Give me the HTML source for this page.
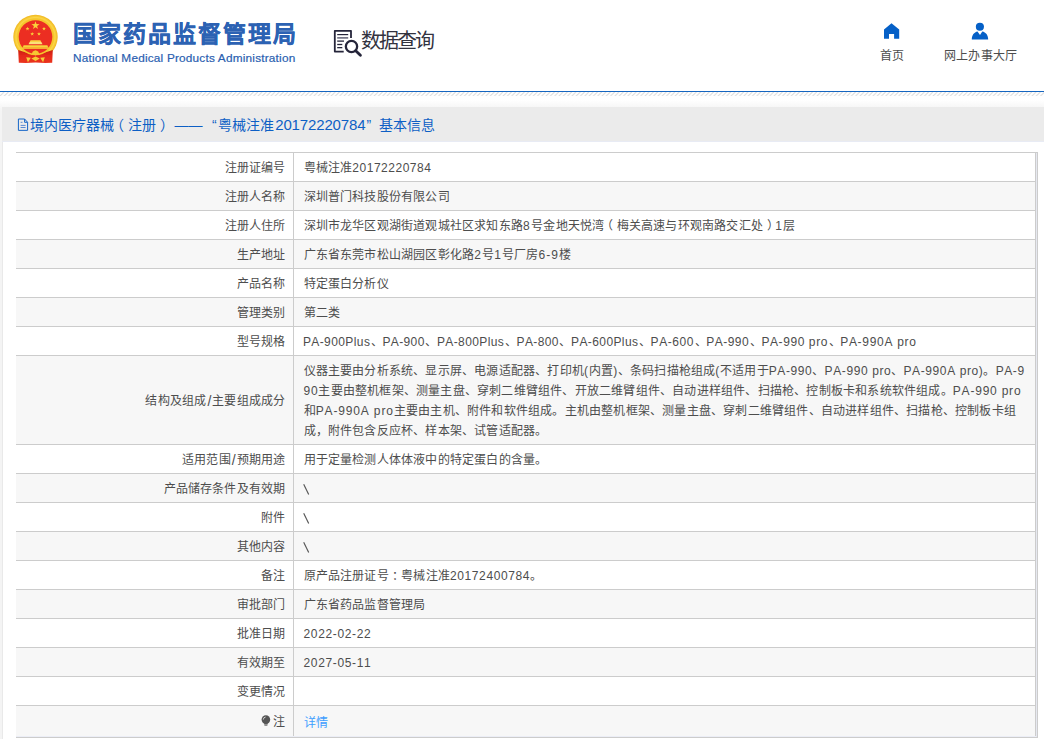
<!DOCTYPE html>
<html lang="zh-CN">
<head>
<meta charset="utf-8">
<title>国家药品监督管理局 数据查询</title>
<style>
html,body{margin:0;padding:0;}
html{width:1044px;height:739px;overflow:hidden;background:#fff;}
body{width:1044px;height:739px;overflow:hidden;background:#fff;position:relative;
 font-family:"Liberation Sans",sans-serif;font-size:12px;color:#444;}
.abs{position:absolute;}
#hdr{position:absolute;left:0;top:0;width:1044px;height:91px;background:#fff;}
#cn{position:absolute;left:73px;top:16px;font-size:23px;font-weight:bold;color:#2c62b3;white-space:nowrap;line-height:36px;letter-spacing:2px;-webkit-text-stroke:0.3px #2c62b3;}
#en{position:absolute;left:73px;top:50px;font-size:11.8px;color:#2a5eb0;white-space:nowrap;line-height:16px;letter-spacing:0.2px;-webkit-text-stroke:0.2px #2a5eb0;}
#dq{position:absolute;left:361px;top:27px;font-size:20px;color:#33333f;white-space:nowrap;line-height:28px;letter-spacing:-2px;}
.nav{position:absolute;top:48px;font-size:12px;color:#4d4d4d;letter-spacing:0.2px;line-height:16px;white-space:nowrap;text-align:center;}
#blue{position:absolute;left:0;top:91px;width:1044px;height:1px;background:#1565c0;}
#hatch{position:absolute;left:0;top:92px;width:1044px;height:4px;display:block;}
#pgbg{position:absolute;left:0;top:96px;width:1044px;height:643px;background:linear-gradient(#fff 0,#fff 4px,#f7f7f7 11px,#f4f4f4 15px,#f4f4f4 100%);}
#box{position:absolute;left:2px;top:107px;width:1042px;height:632px;background:#fff;overflow:hidden;}
#lstrip{position:absolute;left:0;top:35px;width:1px;height:597px;background:#e9e9e9;}
#bstrip{position:absolute;left:14px;top:629px;width:1020px;height:1px;background:#eceef6;}
#bar{position:absolute;left:0;top:0;width:100%;height:34px;background:#ebebeb;border-bottom:1px solid #e8ebf4;}
#ttl{position:absolute;left:0;top:0;line-height:35px;font-size:14px;color:#0d5fc5;white-space:nowrap;}
#ttl span{position:absolute;top:1px;}
table{position:absolute;left:14px;top:45px;width:1020px;border-collapse:collapse;table-layout:fixed;}
td{border:1px solid #ccc;padding:5px 10px 3px;line-height:20px;font-size:12px;vertical-align:middle;color:#4d4d4d;letter-spacing:0.2px;}
td.l{width:259.5px;text-align:right;padding-right:7px;padding-left:10px;border-left:none;}
tr:nth-child(even) td{background:#f7f7f7;}
#rstrip{position:absolute;left:1034px;top:45px;width:1px;height:584px;border-bottom:1px solid #ccc;background:#e6e8f0;border-top:1px solid #ccc;border-right:1px solid #ccc;}
td.nw{white-space:nowrap;}
.e{letter-spacing:0.65px;font-kerning:none;font-size:12px;}
.ib{display:inline-block;letter-spacing:0.42px;white-space:nowrap;margin-left:-0.6px;margin-right:0.6px;}
.bs{vertical-align:-2px;margin-left:-1px;}
.sl{font-size:14px;line-height:0;letter-spacing:0;margin:0 1px;position:relative;top:0.5px;}
.pl{position:relative;left:-3.5px;}
.pr{position:relative;left:3.5px;}
.pc{position:relative;left:3px;}
tr.last td{height:23px;}
tr.last td.l{padding-top:4px;padding-bottom:4px;}
.bulb{vertical-align:-1px;margin-right:2px;}
a{color:#409eff;text-decoration:none;}
</style>
</head>
<body>
<div id="hdr">
  <svg id="emblem" class="abs" style="left:10px;top:12px" width="52" height="54" viewBox="10 12 52 54">
    <defs>
      <radialGradient id="gold" cx="50%" cy="50%" r="50%"><stop offset="0.76" stop-color="#f2b91f"/><stop offset="0.88" stop-color="#fbd646"/><stop offset="1" stop-color="#f0b61e"/></radialGradient>
      <linearGradient id="rib" x1="0" y1="0" x2="0" y2="1"><stop offset="0" stop-color="#c91f10"/><stop offset="0.45" stop-color="#e62a1b"/><stop offset="1" stop-color="#ea3420"/></linearGradient>
      <filter id="soft" x="-5%" y="-5%" width="110%" height="110%"><feGaussianBlur stdDeviation="0.35"/></filter>
    </defs>
    <g filter="url(#soft)">
      <circle cx="35.5" cy="37" r="22.2" fill="url(#gold)"/>
      <!-- ribbons over lower ring -->
      <path d="M18.2 50 L26 52.5 H45 L52.8 50 L52.2 62.7 L45.2 63 L35.5 62.4 L25.8 63 L18.8 62.7 Z" fill="url(#rib)"/>
      <!-- thin inner ring + red disc -->
      <circle cx="35.5" cy="37" r="18.3" fill="#f6c52c"/>
      <circle cx="35.5" cy="37" r="16.8" fill="#ec2d22"/>
      <!-- stars -->
      <polygon fill="#f9d23a" points="35.5,21.2 36.5,24.1 39.6,24.2 37.1,26.0 38.0,29.0 35.5,27.2 33.0,29.0 33.9,26.0 31.4,24.2 34.5,24.1"/>
      <polygon fill="#f9d23a" points="27.5,26.8 28.0,28.1 29.4,28.1 28.3,29.0 28.7,30.4 27.5,29.6 26.3,30.4 26.7,29.0 25.6,28.1 27.0,28.1"/>
      <polygon fill="#f9d23a" points="44,26.8 44.5,28.1 45.9,28.1 44.8,29.0 45.2,30.4 44,29.6 42.8,30.4 43.2,29.0 42.1,28.1 43.5,28.1"/>
      <polygon fill="#f9d23a" points="32.2,32.0 32.7,33.3 34.1,33.3 33.0,34.2 33.4,35.6 32.2,34.8 31.0,35.6 31.4,34.2 30.3,33.3 31.7,33.3"/>
      <polygon fill="#f9d23a" points="39,32.0 39.5,33.3 40.9,33.3 39.8,34.2 40.2,35.6 39,34.8 37.8,35.6 38.2,34.2 37.1,33.3 38.5,33.3"/>
      <!-- Tiananmen -->
      <path d="M30.6 40.2 L40.4 40.2 L41.3 42.1 L29.7 42.1 Z" fill="#f9d544"/>
      <path d="M29.6 42.1 L41.4 42.1 L42.5 44.3 L28.5 44.3 Z" fill="#fbe07a"/>
      <path d="M23.6 45.2 L47.4 45.2 L48.4 47.8 L22.6 47.8 Z" fill="#f9d23a"/>
      <rect x="20.2" y="47.7" width="30.6" height="1.1" fill="#f8cf35"/>
      <!-- bottom knot -->
      <path d="M31.2 55.1 L32.8 51.6 L35.5 50.3 L38.2 51.6 L39.8 55.1 L37.8 54.3 L35.5 55.4 L33.2 54.3 Z" fill="#f6c832"/>
      <path d="M26.2 57.3 L30.8 57.8 L27.9 62.2 Z" fill="#f6cf3a"/>
      <path d="M44.8 57.3 L40.2 57.8 L43.1 62.2 Z" fill="#f6cf3a"/>
      <path d="M31.4 58.6 L35.5 56.4 L39.8 58.6 L35.5 60.9 Z" fill="#f6cc36"/>
    </g>
  </svg>
  <div id="cn">国家药品监督管理局</div>
  <div id="en">National Medical Products Administration</div>
  <svg class="abs" style="left:330px;top:26px" width="36" height="34" viewBox="330 26 36 34" fill="none" stroke="#25253a">
    <path d="M351 38 V30.8 H334.8 V51.6 H343.7" stroke-width="1.8" stroke-linejoin="round"/>
    <path d="M337.2 34.6 H348.2" stroke-width="1.2"/>
    <path d="M337.2 37.9 H348.2" stroke-width="1.4" stroke="#55556a"/>
    <path d="M337.2 41.1 H344" stroke-width="1.3"/>
    <path d="M337.2 44.5 H342.3" stroke-width="1.3"/>
    <path d="M337.2 47.65 H342.3" stroke-width="1.3"/>
    <circle cx="351.5" cy="46.5" r="5.65" stroke-width="2.3"/>
    <path d="M355.7 50.8 L360.4 55.2" stroke-width="2.9" stroke-linecap="round"/>
  </svg>
  <div id="dq">数据查询</div>
  <svg class="abs" style="left:880px;top:20px" width="24" height="22" viewBox="880 20 24 22">
    <path d="M884 29.4 L891.5 23.3 L899.2 29.4 V38.8 H894.1 V33.9 H889 V38.8 H884 Z" fill="#0560c7"/>
  </svg>
  <svg class="abs" style="left:968px;top:20px" width="24" height="22" viewBox="968 20 24 22">
    <circle cx="979.9" cy="26.76" r="4.06" fill="#0560c7"/>
    <path d="M971.8 39.55 C971.8 35.2 974.2 32.2 977.5 31.6 L980 35.1 L982.3 31.6 C985.8 32.2 988.2 35.2 988.2 39.55 Z" fill="#0560c7"/>
  </svg>
  <div class="nav" style="left:880px;">首页</div>
  <div class="nav" style="left:944px;">网上办事大厅</div>
</div>
<div id="blue"></div>
<svg id="hatch" width="1044" height="4" viewBox="0 0 1044 4"><defs><pattern id="hp" width="4.3" height="4" patternUnits="userSpaceOnUse"><path d="M-0.2 4.2 L4.2 -0.2 M-4.5 4.2 L-0.1 -0.2 M4.1 4.2 L8.5 -0.2" stroke="#dcdcdc" stroke-width="1.0" fill="none"/></pattern></defs><rect x="0" y="0" width="1044" height="4" fill="url(#hp)"/></svg>
<div id="pgbg"></div>
<div id="box">
  <div id="lstrip"></div>
  <div id="bar">
    <svg class="abs" style="left:14px;top:9px" width="16" height="18" viewBox="16 116 16 18" fill="none" stroke="#1565c8">
      <path d="M18.4 119 H24.6 L27.6 122.3 V130.35 H18.4 Z" stroke-width="1"/>
      <path d="M24.6 119 V122.3 H27.6" stroke-width="1"/>
      <path d="M20.6 122.3 H22.5 M20.6 125.4 H25.6 M20.6 127.5 H25.6" stroke-width="0.9" stroke="#4a7fd0"/>
    </svg>
    <div id="ttl">
      <span style="left:28.4px">境内医疗器械</span>
      <span style="left:108.4px">（</span>
      <span style="left:126.4px">注册</span>
      <span style="left:158.4px">）</span>
      <span style="left:172.4px">——</span>
      <span style="left:210px">“</span>
      <span style="left:216.4px">粤械注准</span>
      <span style="left:273.2px;top:0.4px;letter-spacing:-0.14px;font-size:15px">20172220784</span>
      <span style="left:364.4px">”</span>
      <span style="left:376.7px">基本信息</span>
    </div>
  </div>
  <table>
    <tr><td class="l">注册证编号</td><td>粤械注准<span class="e" style="letter-spacing:0.52px">20172220784</span></td></tr>
    <tr><td class="l">注册人名称</td><td>深圳普门科技股份有限公司</td></tr>
    <tr><td class="l">注册人住所</td><td>深圳市龙华区观湖街道观城社区求知东路<span class="e" style="letter-spacing:1.4px">8</span>号金地天悦湾<span class="pl">（</span>梅关高速与环观南路交汇处<span class="pr">）</span><span class="e" style="letter-spacing:1.4px">1</span>层</td></tr>
    <tr><td class="l">生产地址</td><td>广东省东莞市松山湖园区彰化路<span class="e" style="letter-spacing:1.0px">2</span>号<span class="e" style="letter-spacing:1.0px">1</span>号厂房<span class="e" style="letter-spacing:1.0px">6-9</span>楼</td></tr>
    <tr><td class="l">产品名称</td><td>特定蛋白分析仪</td></tr>
    <tr><td class="l">管理类别</td><td>第二类</td></tr>
    <tr><td class="l">型号规格</td><td><span class="e ib" style="width:67.4px;letter-spacing:0.4px">PA-900Plus</span>、<span class="e ib" style="width:42.2px;letter-spacing:0.36px">PA-900</span>、<span class="e ib" style="width:67.4px;letter-spacing:0.4px">PA-800Plus</span>、<span class="e ib" style="width:42.4px;letter-spacing:0.39px">PA-800</span>、<span class="e ib" style="width:67.3px;letter-spacing:0.39px">PA-600Plus</span>、<span class="e ib" style="width:43.4px;letter-spacing:0.56px">PA-600</span>、<span class="e ib" style="width:43.0px;letter-spacing:0.49px">PA-990</span>、<span class="e ib" style="width:66.6px;letter-spacing:0.59px">PA-990 pro</span>、<span class="e ib" style="width:76px;letter-spacing:0.7px">PA-990A pro</span></td></tr>
    <tr><td class="l">结构及组成<span class="e sl">/</span>主要组成成分</td><td class="nw">仪器主要由分析系统、显示屏、电源适配器、打印机<span class="e" style="letter-spacing:0.6px">(</span>内置<span class="e" style="letter-spacing:0.6px">)</span>、条码扫描枪组成<span class="e" style="letter-spacing:0.6px">(</span>不适用于<span class="e" style="letter-spacing:0.6px">PA-990</span>、<span class="e" style="letter-spacing:0.6px">PA-990 pro</span>、<span class="e" style="letter-spacing:0.6px">PA-990A pro)</span>。<span class="e" style="letter-spacing:0.6px">PA-9</span><br><span class="e" style="letter-spacing:0.78px">90</span>主要由整机框架、测量主盘、穿刺二维臂组件、开放二维臂组件、自动进样组件、扫描枪、控制板卡和系统软件组成。<span class="e" style="letter-spacing:0.78px">PA-990 pro</span><br>和<span class="e" style="letter-spacing:0.85px">PA-990A pro</span>主要由主机、附件和软件组成。主机由整机框架、测量主盘、穿刺二维臂组件、自动进样组件、扫描枪、控制板卡组<br>成，附件包含反应杯、样本架、试管适配器。</td></tr>
    <tr><td class="l">适用范围<span class="e sl">/</span>预期用途</td><td>用于定量检测人体体液中的特定蛋白的含量。</td></tr>
    <tr><td class="l">产品储存条件及有效期</td><td><svg class="bs" width="7" height="12" viewBox="0 0 7 12"><path d="M0.7 1.3 L5.7 11.5" stroke="#555" stroke-width="1.15" fill="none"/></svg></td></tr>
    <tr><td class="l">附件</td><td><svg class="bs" width="7" height="12" viewBox="0 0 7 12"><path d="M0.7 1.3 L5.7 11.5" stroke="#555" stroke-width="1.15" fill="none"/></svg></td></tr>
    <tr><td class="l">其他内容</td><td><svg class="bs" width="7" height="12" viewBox="0 0 7 12"><path d="M0.7 1.3 L5.7 11.5" stroke="#555" stroke-width="1.15" fill="none"/></svg></td></tr>
    <tr><td class="l">备注</td><td>原产品注册证号<span class="pc">：</span>粤械注准<span class="e" style="letter-spacing:0.62px">20172400784</span>。</td></tr>
    <tr><td class="l">审批部门</td><td>广东省药品监督管理局</td></tr>
    <tr><td class="l">批准日期</td><td><span class="e">2022-02-22</span></td></tr>
    <tr><td class="l">有效期至</td><td><span class="e">2027-05-11</span></td></tr>
    <tr><td class="l">变更情况</td><td></td></tr>
    <tr class="last"><td class="l"><svg class="bulb" width="10" height="12" viewBox="0 0 10 12"><circle cx="4.9" cy="4.6" r="4.3" fill="#555"/><path d="M3.2 8.2 H6.6 V9.6 H3.2 Z" fill="#555"/><path d="M3.4 10.4 H6.4" stroke="#777" stroke-width="0.9"/><path d="M2.3 4.6 A2.7 2.7 0 0 1 4.6 2" stroke="#ddd" stroke-width="0.9" fill="none"/></svg>注</td><td><a>详情</a></td></tr>
  </table>
  <div id="rstrip"></div>
  <div id="bstrip"></div>
</div>
</body>
</html>
